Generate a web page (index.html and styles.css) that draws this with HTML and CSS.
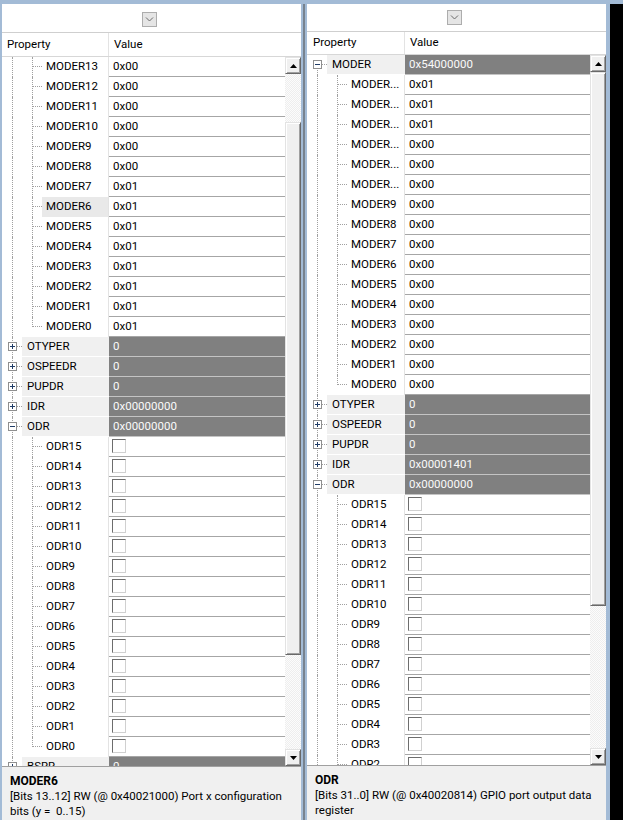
FILE: index.html
```html
<!doctype html>
<html>
<head>
  <meta charset="utf-8">
  <link rel="stylesheet" href="styles.css">
</head>
<body>
  <div class="panel left">
    <div class="toolbar"><span class="drop"><svg width="9" height="5" viewBox="0 0 9 5"><path d="M1 0.5l3.5 3.5l3.5-3.5" fill="none" stroke="#6a6a6a"/></svg></span></div>
    <div class="head"><div class="h-prop">Property</div><div class="h-val">Value</div></div>
    <div class="body">
      <div class="grid">
        <div class="row"><div class="prop"><i class="g"></i><i class="g c"></i><span class="lbl">MODER13</span></div><div class="val">0x00</div></div>
        <div class="row"><div class="prop"><i class="g"></i><i class="g c"></i><span class="lbl">MODER12</span></div><div class="val">0x00</div></div>
        <div class="row"><div class="prop"><i class="g"></i><i class="g c"></i><span class="lbl">MODER11</span></div><div class="val">0x00</div></div>
        <div class="row"><div class="prop"><i class="g"></i><i class="g c"></i><span class="lbl">MODER10</span></div><div class="val">0x00</div></div>
        <div class="row"><div class="prop"><i class="g"></i><i class="g c"></i><span class="lbl">MODER9</span></div><div class="val">0x00</div></div>
        <div class="row"><div class="prop"><i class="g"></i><i class="g c"></i><span class="lbl">MODER8</span></div><div class="val">0x00</div></div>
        <div class="row"><div class="prop"><i class="g"></i><i class="g c"></i><span class="lbl">MODER7</span></div><div class="val">0x01</div></div>
        <div class="row sel"><div class="prop"><i class="g"></i><i class="g c"></i><span class="lbl">MODER6</span></div><div class="val">0x01</div></div>
        <div class="row"><div class="prop"><i class="g"></i><i class="g c"></i><span class="lbl">MODER5</span></div><div class="val">0x01</div></div>
        <div class="row"><div class="prop"><i class="g"></i><i class="g c"></i><span class="lbl">MODER4</span></div><div class="val">0x01</div></div>
        <div class="row"><div class="prop"><i class="g"></i><i class="g c"></i><span class="lbl">MODER3</span></div><div class="val">0x01</div></div>
        <div class="row"><div class="prop"><i class="g"></i><i class="g c"></i><span class="lbl">MODER2</span></div><div class="val">0x01</div></div>
        <div class="row"><div class="prop"><i class="g"></i><i class="g c"></i><span class="lbl">MODER1</span></div><div class="val">0x01</div></div>
        <div class="row"><div class="prop"><i class="g"></i><i class="g c end"></i><span class="lbl">MODER0</span></div><div class="val">0x01</div></div>

        <div class="row grp"><div class="prop"><i class="g x"><svg class="ex" viewBox="0 0 9 9"><rect x=".5" y=".5" width="8" height="8" fill="#fff" stroke="#8f8f8f"/><path d="M2 4.5h5M4.5 2v5" stroke="#203c66"/></svg></i><span class="lbl">OTYPER</span></div><div class="val">0</div></div>
        <div class="row grp"><div class="prop"><i class="g x"><svg class="ex" viewBox="0 0 9 9"><rect x=".5" y=".5" width="8" height="8" fill="#fff" stroke="#8f8f8f"/><path d="M2 4.5h5M4.5 2v5" stroke="#203c66"/></svg></i><span class="lbl">OSPEEDR</span></div><div class="val">0</div></div>
        <div class="row grp"><div class="prop"><i class="g x"><svg class="ex" viewBox="0 0 9 9"><rect x=".5" y=".5" width="8" height="8" fill="#fff" stroke="#8f8f8f"/><path d="M2 4.5h5M4.5 2v5" stroke="#203c66"/></svg></i><span class="lbl">PUPDR</span></div><div class="val">0</div></div>
        <div class="row grp"><div class="prop"><i class="g x"><svg class="ex" viewBox="0 0 9 9"><rect x=".5" y=".5" width="8" height="8" fill="#fff" stroke="#8f8f8f"/><path d="M2 4.5h5M4.5 2v5" stroke="#203c66"/></svg></i><span class="lbl">IDR</span></div><div class="val">0x00000000</div></div>
        <div class="row grp"><div class="prop"><i class="g x"><svg class="ex" viewBox="0 0 9 9"><rect x=".5" y=".5" width="8" height="8" fill="#fff" stroke="#8f8f8f"/><path d="M2 4.5h5" stroke="#203c66"/></svg></i><span class="lbl">ODR</span></div><div class="val">0x00000000</div></div>

        <div class="row"><div class="prop"><i class="g"></i><i class="g c"></i><span class="lbl">ODR15</span></div><div class="val"><span class="chk"></span></div></div>
        <div class="row"><div class="prop"><i class="g"></i><i class="g c"></i><span class="lbl">ODR14</span></div><div class="val"><span class="chk"></span></div></div>
        <div class="row"><div class="prop"><i class="g"></i><i class="g c"></i><span class="lbl">ODR13</span></div><div class="val"><span class="chk"></span></div></div>
        <div class="row"><div class="prop"><i class="g"></i><i class="g c"></i><span class="lbl">ODR12</span></div><div class="val"><span class="chk"></span></div></div>
        <div class="row"><div class="prop"><i class="g"></i><i class="g c"></i><span class="lbl">ODR11</span></div><div class="val"><span class="chk"></span></div></div>
        <div class="row"><div class="prop"><i class="g"></i><i class="g c"></i><span class="lbl">ODR10</span></div><div class="val"><span class="chk"></span></div></div>
        <div class="row"><div class="prop"><i class="g"></i><i class="g c"></i><span class="lbl">ODR9</span></div><div class="val"><span class="chk"></span></div></div>
        <div class="row"><div class="prop"><i class="g"></i><i class="g c"></i><span class="lbl">ODR8</span></div><div class="val"><span class="chk"></span></div></div>
        <div class="row"><div class="prop"><i class="g"></i><i class="g c"></i><span class="lbl">ODR7</span></div><div class="val"><span class="chk"></span></div></div>
        <div class="row"><div class="prop"><i class="g"></i><i class="g c"></i><span class="lbl">ODR6</span></div><div class="val"><span class="chk"></span></div></div>
        <div class="row"><div class="prop"><i class="g"></i><i class="g c"></i><span class="lbl">ODR5</span></div><div class="val"><span class="chk"></span></div></div>
        <div class="row"><div class="prop"><i class="g"></i><i class="g c"></i><span class="lbl">ODR4</span></div><div class="val"><span class="chk"></span></div></div>
        <div class="row"><div class="prop"><i class="g"></i><i class="g c"></i><span class="lbl">ODR3</span></div><div class="val"><span class="chk"></span></div></div>
        <div class="row"><div class="prop"><i class="g"></i><i class="g c"></i><span class="lbl">ODR2</span></div><div class="val"><span class="chk"></span></div></div>
        <div class="row"><div class="prop"><i class="g"></i><i class="g c"></i><span class="lbl">ODR1</span></div><div class="val"><span class="chk"></span></div></div>
        <div class="row"><div class="prop"><i class="g"></i><i class="g c end"></i><span class="lbl">ODR0</span></div><div class="val"><span class="chk"></span></div></div>

        <div class="row grp"><div class="prop"><i class="g x"><svg class="ex" viewBox="0 0 9 9"><rect x=".5" y=".5" width="8" height="8" fill="#fff" stroke="#8f8f8f"/><path d="M2 4.5h5M4.5 2v5" stroke="#203c66"/></svg></i><span class="lbl">BSRR</span></div><div class="val">0</div></div>
      </div>
      <div class="sb">
        <div class="sb-btn"><svg width="7" height="4" viewBox="0 0 7 4"><path d="M3.5 0L7 4H0z" fill="#000"/></svg></div>
        <div class="sb-gap"></div>
        <div class="sb-thumb"></div>
        <div class="sb-rest"></div>
        <div class="sb-btn"><svg width="7" height="4" viewBox="0 0 7 4"><path d="M0 0h7L3.5 4z" fill="#000"/></svg></div>
      </div>
    </div>
    <div class="desc"><b>MODER6</b><br>[Bits 13..12] RW (@ 0x40021000) Port x configuration<br>bits (y =&nbsp; 0..15)</div>
  </div>

  <div class="split"></div>

  <div class="panel right">
    <div class="toolbar"><span class="drop"><svg width="9" height="5" viewBox="0 0 9 5"><path d="M1 0.5l3.5 3.5l3.5-3.5" fill="none" stroke="#6a6a6a"/></svg></span></div>
    <div class="head"><div class="h-prop">Property</div><div class="h-val">Value</div></div>
    <div class="body">
      <div class="grid">
        <div class="row grp"><div class="prop"><i class="g x first"><svg class="ex" viewBox="0 0 9 9"><rect x=".5" y=".5" width="8" height="8" fill="#fff" stroke="#8f8f8f"/><path d="M2 4.5h5" stroke="#203c66"/></svg></i><span class="lbl">MODER</span></div><div class="val">0x54000000</div></div>
        <div class="row"><div class="prop"><i class="g"></i><i class="g c"></i><span class="lbl">MODER...</span></div><div class="val">0x01</div></div>
        <div class="row"><div class="prop"><i class="g"></i><i class="g c"></i><span class="lbl">MODER...</span></div><div class="val">0x01</div></div>
        <div class="row"><div class="prop"><i class="g"></i><i class="g c"></i><span class="lbl">MODER...</span></div><div class="val">0x01</div></div>
        <div class="row"><div class="prop"><i class="g"></i><i class="g c"></i><span class="lbl">MODER...</span></div><div class="val">0x00</div></div>
        <div class="row"><div class="prop"><i class="g"></i><i class="g c"></i><span class="lbl">MODER...</span></div><div class="val">0x00</div></div>
        <div class="row"><div class="prop"><i class="g"></i><i class="g c"></i><span class="lbl">MODER...</span></div><div class="val">0x00</div></div>
        <div class="row"><div class="prop"><i class="g"></i><i class="g c"></i><span class="lbl">MODER9</span></div><div class="val">0x00</div></div>
        <div class="row"><div class="prop"><i class="g"></i><i class="g c"></i><span class="lbl">MODER8</span></div><div class="val">0x00</div></div>
        <div class="row"><div class="prop"><i class="g"></i><i class="g c"></i><span class="lbl">MODER7</span></div><div class="val">0x00</div></div>
        <div class="row"><div class="prop"><i class="g"></i><i class="g c"></i><span class="lbl">MODER6</span></div><div class="val">0x00</div></div>
        <div class="row"><div class="prop"><i class="g"></i><i class="g c"></i><span class="lbl">MODER5</span></div><div class="val">0x00</div></div>
        <div class="row"><div class="prop"><i class="g"></i><i class="g c"></i><span class="lbl">MODER4</span></div><div class="val">0x00</div></div>
        <div class="row"><div class="prop"><i class="g"></i><i class="g c"></i><span class="lbl">MODER3</span></div><div class="val">0x00</div></div>
        <div class="row"><div class="prop"><i class="g"></i><i class="g c"></i><span class="lbl">MODER2</span></div><div class="val">0x00</div></div>
        <div class="row"><div class="prop"><i class="g"></i><i class="g c"></i><span class="lbl">MODER1</span></div><div class="val">0x00</div></div>
        <div class="row"><div class="prop"><i class="g"></i><i class="g c end"></i><span class="lbl">MODER0</span></div><div class="val">0x00</div></div>

        <div class="row grp"><div class="prop"><i class="g x"><svg class="ex" viewBox="0 0 9 9"><rect x=".5" y=".5" width="8" height="8" fill="#fff" stroke="#8f8f8f"/><path d="M2 4.5h5M4.5 2v5" stroke="#203c66"/></svg></i><span class="lbl">OTYPER</span></div><div class="val">0</div></div>
        <div class="row grp"><div class="prop"><i class="g x"><svg class="ex" viewBox="0 0 9 9"><rect x=".5" y=".5" width="8" height="8" fill="#fff" stroke="#8f8f8f"/><path d="M2 4.5h5M4.5 2v5" stroke="#203c66"/></svg></i><span class="lbl">OSPEEDR</span></div><div class="val">0</div></div>
        <div class="row grp"><div class="prop"><i class="g x"><svg class="ex" viewBox="0 0 9 9"><rect x=".5" y=".5" width="8" height="8" fill="#fff" stroke="#8f8f8f"/><path d="M2 4.5h5M4.5 2v5" stroke="#203c66"/></svg></i><span class="lbl">PUPDR</span></div><div class="val">0</div></div>
        <div class="row grp"><div class="prop"><i class="g x"><svg class="ex" viewBox="0 0 9 9"><rect x=".5" y=".5" width="8" height="8" fill="#fff" stroke="#8f8f8f"/><path d="M2 4.5h5M4.5 2v5" stroke="#203c66"/></svg></i><span class="lbl">IDR</span></div><div class="val">0x00001401</div></div>
        <div class="row grp"><div class="prop"><i class="g x"><svg class="ex" viewBox="0 0 9 9"><rect x=".5" y=".5" width="8" height="8" fill="#fff" stroke="#8f8f8f"/><path d="M2 4.5h5" stroke="#203c66"/></svg></i><span class="lbl">ODR</span></div><div class="val">0x00000000</div></div>

        <div class="row"><div class="prop"><i class="g"></i><i class="g c"></i><span class="lbl">ODR15</span></div><div class="val"><span class="chk"></span></div></div>
        <div class="row"><div class="prop"><i class="g"></i><i class="g c"></i><span class="lbl">ODR14</span></div><div class="val"><span class="chk"></span></div></div>
        <div class="row"><div class="prop"><i class="g"></i><i class="g c"></i><span class="lbl">ODR13</span></div><div class="val"><span class="chk"></span></div></div>
        <div class="row"><div class="prop"><i class="g"></i><i class="g c"></i><span class="lbl">ODR12</span></div><div class="val"><span class="chk"></span></div></div>
        <div class="row"><div class="prop"><i class="g"></i><i class="g c"></i><span class="lbl">ODR11</span></div><div class="val"><span class="chk"></span></div></div>
        <div class="row"><div class="prop"><i class="g"></i><i class="g c"></i><span class="lbl">ODR10</span></div><div class="val"><span class="chk"></span></div></div>
        <div class="row"><div class="prop"><i class="g"></i><i class="g c"></i><span class="lbl">ODR9</span></div><div class="val"><span class="chk"></span></div></div>
        <div class="row"><div class="prop"><i class="g"></i><i class="g c"></i><span class="lbl">ODR8</span></div><div class="val"><span class="chk"></span></div></div>
        <div class="row"><div class="prop"><i class="g"></i><i class="g c"></i><span class="lbl">ODR7</span></div><div class="val"><span class="chk"></span></div></div>
        <div class="row"><div class="prop"><i class="g"></i><i class="g c"></i><span class="lbl">ODR6</span></div><div class="val"><span class="chk"></span></div></div>
        <div class="row"><div class="prop"><i class="g"></i><i class="g c"></i><span class="lbl">ODR5</span></div><div class="val"><span class="chk"></span></div></div>
        <div class="row"><div class="prop"><i class="g"></i><i class="g c"></i><span class="lbl">ODR4</span></div><div class="val"><span class="chk"></span></div></div>
        <div class="row"><div class="prop"><i class="g"></i><i class="g c"></i><span class="lbl">ODR3</span></div><div class="val"><span class="chk"></span></div></div>
        <div class="row"><div class="prop"><i class="g"></i><i class="g c"></i><span class="lbl">ODR2</span></div><div class="val"><span class="chk"></span></div></div>
        <div class="row"><div class="prop"><i class="g"></i><i class="g c"></i><span class="lbl">ODR1</span></div><div class="val"><span class="chk"></span></div></div>
      </div>
      <div class="sb">
        <div class="sb-btn"><svg width="7" height="4" viewBox="0 0 7 4"><path d="M3.5 0L7 4H0z" fill="#000"/></svg></div>
        <div class="sb-gap"></div>
        <div class="sb-thumb"></div>
        <div class="sb-rest"></div>
        <div class="sb-btn"><svg width="7" height="4" viewBox="0 0 7 4"><path d="M0 0h7L3.5 4z" fill="#000"/></svg></div>
      </div>
    </div>
    <div class="desc"><b>ODR</b><br>[Bits 31..0] RW (@ 0x40020814) GPIO port output data<br>register</div>
  </div>

  <div class="edge"></div>
</body>
</html>
```

FILE: styles.css
```css
html, body {
  margin: 0;
  height: 100%;
  overflow: hidden;
}
body {
  display: flex;
  box-sizing: border-box;
  padding: 4px 0 0 2px;
  background: #a3bbd6;
  font-family: Roboto, "Liberation Sans", sans-serif;
  font-size: 11.5px;
  color: #000;
}
.panel {
  width: 299px;
  flex: none;
  display: flex;
  flex-direction: column;
  background: #fff;
}
.split {
  width: 2px;
  flex: none;
  margin: 0 2px;
  background: #78838f;
}
.edge {
  flex: 1;
  margin-left: 4px;
  background: #000;
}

/* toolbar with the drop button */
.toolbar {
  height: 28px;
  flex: none;
  display: flex;
  align-items: center;
  justify-content: center;
  padding-right: 5px;
  border-bottom: 1px solid #cfcfcf;
}
.right .toolbar {
  height: 27px;
}
.drop {
  width: 15px;
  height: 15px;
  box-sizing: border-box;
  border: 1px solid #adadad;
  background: #e5e5e5;
  display: flex;
  align-items: center;
  justify-content: center;
  margin-top: 2px;
}
.right .drop {
  margin-top: 0;
}

.head {
  height: 23px;
  flex: none;
  display: flex;
  border-bottom: 1px solid #d7d7d7;
  line-height: 22px;
}
.right .head {
  height: 22px;
  line-height: 21px;
}
.h-prop {
  width: 107px;
  box-sizing: border-box;
  padding-left: 5px;
  border-right: 1px solid #e3e3e3;
}
.right .h-prop {
  width: 98px;
  padding-left: 6px;
}
.h-val {
  padding-left: 5px;
}

.body {
  flex: 1;
  min-height: 0;
  display: flex;
  overflow: hidden;
}
.grid {
  flex: 1;
  min-width: 0;
}

/* property rows */
.row {
  height: 20px;
  display: flex;
  line-height: 19px;
}
.prop {
  width: 107px;
  flex: none;
  display: flex;
  box-sizing: border-box;
  border-right: 1px solid #e3e3e3;
}
.right .prop {
  width: 98px;
}
.lbl {
  flex: 1;
  padding-left: 4px;
  white-space: nowrap;
  overflow: hidden;
}
.grp .lbl {
  background: #f0f0f0;
  height: 19px;
  padding-left: 5px;
}
.sel .lbl {
  background: #e9e9e9;
}
.val {
  flex: 1;
  height: 19px;
  padding-left: 4px;
  border-bottom: 1px solid #a6a6a6;
  white-space: nowrap;
}
.grp .prop {
  border-right: 0;
}
.grp .val {
  background: #808080;
  color: #fafafa;
  border-bottom-color: #c4c4c4;
}

/* tree guides */
.g {
  width: 20px;
  flex: none;
  position: relative;
}
.g::before {
  content: '';
  position: absolute;
  left: 10px;
  top: 0;
  bottom: 0;
  border-left: 1px dotted #a0a0a0;
}
.g.first::before {
  top: 9px;
}
.c::after, .x::after {
  content: '';
  position: absolute;
  left: 11px;
  right: 0;
  top: 9px;
  border-top: 1px dotted #a0a0a0;
}
.x::after {
  left: 15px;
}
.end::before {
  bottom: 10px;
}
.ex {
  position: absolute;
  left: 6px;
  top: 5px;
  width: 9px;
  height: 9px;
}

.chk {
  display: block;
  width: 14px;
  height: 14px;
  box-sizing: border-box;
  margin: 2px 0 0 -1px;
  border: 1px solid;
  border-color: #6d6d6d #d0d0d0 #d0d0d0 #6d6d6d;
  background: #fff;
}

/* scrollbar */
.sb {
  width: 16px;
  flex: none;
  display: flex;
  flex-direction: column;
  background: repeating-conic-gradient(#eeeeee 0 25%, #fcfcfc 0 50%) 0 0/2px 2px;
}
.sb-btn, .sb-thumb {
  flex: none;
  box-sizing: border-box;
  border: 1px solid;
  border-color: #e3e3e3 #696969 #696969 #e3e3e3;
  box-shadow: inset 1px 1px #fff, inset -1px -1px #a0a0a0;
  background: #f0f0f0;
}
.sb-btn {
  height: 17px;
  display: flex;
  align-items: center;
  justify-content: center;
}
.sb-gap {
  height: 48px;
  flex: none;
}
.sb-thumb {
  height: 533px;
}
.right .sb-gap {
  height: 0;
}
.right .sb-thumb {
  height: 534px;
}
.sb-rest {
  flex: 1;
}

/* description box */
.desc {
  height: 54px;
  flex: none;
  box-sizing: border-box;
  padding: 7px 8px 0;
  border-top: 1px solid #a0a0a0;
  background: #f0f0f0;
  line-height: 15px;
  white-space: nowrap;
  overflow: hidden;
}
.desc b {
  font-size: 12px;
}
.right .desc {
  height: 55px;
}
```
